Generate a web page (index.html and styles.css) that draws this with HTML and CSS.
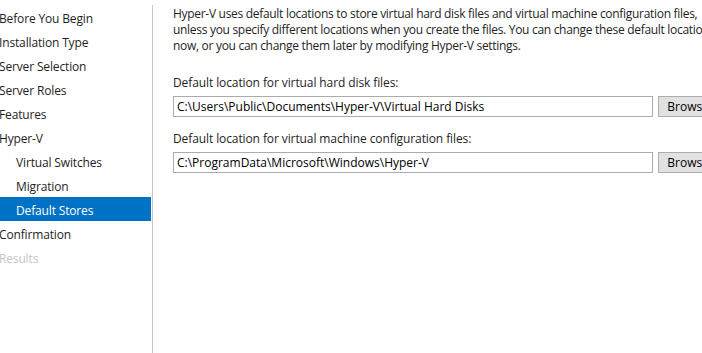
FILE: index.html
```html
<!DOCTYPE html>
<html>
<head>
<meta charset="utf-8">
<link rel="stylesheet" href="styles.css">
</head>
<body>
<div class="wizard">
  <nav class="steps">
    <ul>
      <li class="step">Before You Begin</li>
      <li class="step">Installation Type</li>
      <li class="step">Server Selection</li>
      <li class="step">Server Roles</li>
      <li class="step">Features</li>
      <li class="step">Hyper-V</li>
      <li class="step sub">Virtual Switches</li>
      <li class="step sub">Migration</li>
      <li class="step sub active">Default Stores</li>
      <li class="step">Confirmation</li>
      <li class="step disabled">Results</li>
    </ul>
  </nav>
  <main class="content">
    <p class="intro">Hyper-V uses default locations to store virtual hard disk files and virtual machine configuration files,<br>unless you specify different locations when you create the files. You can change these default locations<br>now, or you can change them later by modifying Hyper-V settings.</p>
    <div class="field">
      <label class="label">Default location for virtual hard disk files:</label>
      <div class="row">
        <div class="textbox">C:\Users\Public\Documents\Hyper-V\Virtual Hard Disks</div>
        <div class="button">Browse...</div>
      </div>
    </div>
    <div class="field">
      <label class="label">Default location for virtual machine configuration files:</label>
      <div class="row">
        <div class="textbox">C:\ProgramData\Microsoft\Windows\Hyper-V</div>
        <div class="button">Browse...</div>
      </div>
    </div>
  </main>
</div>
</body>
</html>
```
FILE: styles.css
```css
* { box-sizing: border-box; }
html, body {
  margin: 0;
  padding: 0;
  width: 702px;
  height: 353px;
  overflow: hidden;
  background: #ffffff;
}
body {
  font-family: "Open Sans", "Noto Sans", sans-serif;
  font-size: 12px;
  color: #1e1e1e;
}
.wizard {
  display: flex;
  height: 353px;
  padding-top: 5px;
}
.steps {
  width: 152px;
  flex: none;
}
.steps ul {
  list-style: none;
  margin: 0;
  padding: 0;
}
.step {
  height: 24px;
  padding-top: 4px;
  line-height: 20px;
  text-indent: -1px;
  letter-spacing: -0.15px;
  white-space: nowrap;
  width: 151px;
}
.step.sub { padding-left: 17px; }
.step.active { background: #0072c6; color: #ffffff; }
.step.disabled { color: #c4c4c4; }
.content {
  flex: 1;
  border-left: 1px solid #c8c8c8;
  padding-left: 20px;
  min-width: 0;
}
.intro {
  margin: 0;
  padding-top: 1px;
  line-height: 16px;
  white-space: nowrap;
  letter-spacing: -0.3px;
}
.field { margin-top: 21px; }
.field + .field { margin-top: 14px; }
.label {
  display: block;
  line-height: 16px;
  letter-spacing: -0.1px;
}
.row {
  display: flex;
  gap: 5px;
  margin-top: 5px;
  width: 560px;
}
.textbox {
  width: 483px;
  height: 21px;
  border: 1px solid #ababab;
  background: #ffffff;
  padding-left: 3px;
  line-height: 19px;
  white-space: nowrap;
  color: #000;
}
.button {
  width: 75px;
  height: 21px;
  border: 1px solid #adadad;
  background: #e1e1e1;
  padding-left: 8px;
  line-height: 19px;
  color: #000;
}
```
